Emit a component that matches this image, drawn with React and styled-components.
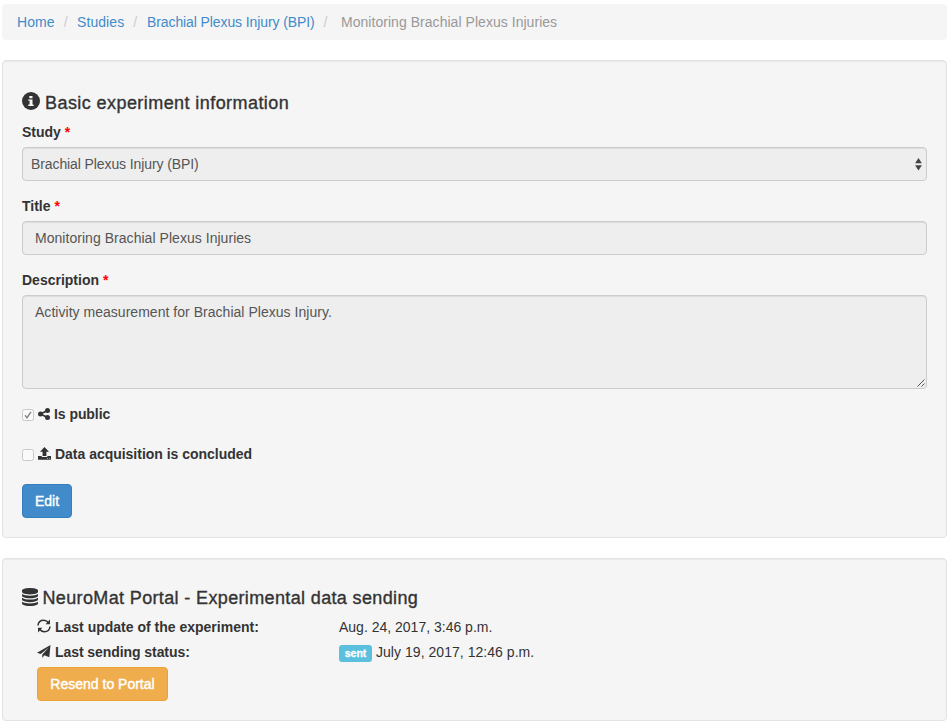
import React from "react";
import styled, { createGlobalStyle } from "styled-components";

const GlobalStyle = createGlobalStyle`
  *, *::before, *::after { box-sizing: border-box; }
  body {
    margin: 0;
    background: #fff;
    color: #333;
    font: 14px/20px "Liberation Sans", Arial, sans-serif;
  }
`;

const Page = styled.div`
  width: 951px;
  height: 724px;
  overflow: hidden;
  padding: 4px 4px 0 2px;
`;

const Breadcrumb = styled.ol`
  display: flex;
  height: 36px;
  margin: 0 0 20px;
  padding: 8px 15px;
  list-style: none;
  white-space: nowrap;
  background: #f5f5f5;
  border-radius: 4px;
`;

const Crumb = styled.li`
  display: flex;
  width: ${(p) => p.$width}px;
  color: #999;
`;

const CrumbLink = styled.a`
  color: #428bca;
  text-decoration: none;
  letter-spacing: ${(p) => p.$track || 0}px;
`;

const CrumbText = styled.span`
  letter-spacing: ${(p) => p.$track || 0}px;
`;

const Slash = styled.span`
  margin-left: 9px;
  color: #ccc;
`;

const Well = styled.section`
  height: ${(p) => p.$height}px;
  margin-bottom: 20px;
  padding: ${(p) => p.$top || 29}px 19px 19px;
  background: #f5f5f5;
  border: 1px solid #e3e3e3;
  border-radius: 4px;
  box-shadow: inset 0 1px 1px rgba(0, 0, 0, 0.05);
`;

const Heading = styled.h4`
  display: flex;
  align-items: center;
  gap: ${(p) => p.$gap}px;
  height: 20px;
  margin: 0 0 ${(p) => p.$after}px;
  font-size: 18px;
  font-weight: 400;
  line-height: 20px;
  white-space: nowrap;
`;

const HeadingText = styled.span`
  padding-top: 5px;
  letter-spacing: ${(p) => p.$track || 0}px;
  -webkit-text-stroke: 0.35px #333;
`;

const Field = styled.div`
  margin-bottom: 15px;
`;

const Label = styled.label`
  display: block;
  margin-bottom: 5px;
  font-weight: 700;
`;

const Required = styled.span`
  color: #f00;
`;

const Control = styled.div`
  display: flex;
  justify-content: space-between;
  height: ${(p) => p.$height || 34}px;
  padding: 6px ${(p) => p.$right || 12}px 1px ${(p) => p.$left || 12}px;
  color: #555;
  background: #eee;
  border: 1px solid #ccc;
  border-radius: 4px;
  box-shadow: inset 0 1px 1px rgba(0, 0, 0, 0.075);
  letter-spacing: ${(p) => p.$track || 0}px;
`;

const Arrows = styled.svg`
  margin-top: 4px;
`;

const Grip = styled.svg`
  align-self: flex-end;
`;

const CheckRow = styled.label`
  display: flex;
  align-items: center;
  height: 20px;
  margin-bottom: 20px;
  font-weight: 700;
  white-space: nowrap;
`;

const CheckBox = styled.span`
  display: flex;
  width: 12px;
  height: 12px;
  margin: 2px 4px 0 0;
  background: #fafafa;
  border: 1px solid #c8c8c8;
  border-radius: 2.5px;
`;

const RowText = styled.span`
  margin-left: ${(p) => p.$gap}px;
  letter-spacing: ${(p) => p.$track || 0}px;
`;

const Button = styled.button`
  display: block;
  width: ${(p) => p.$width}px;
  height: 34px;
  padding: 0;
  color: #fff;
  background: ${(p) => (p.$warning ? "#f0ad4e" : "#428bca")};
  border: 1px solid ${(p) => (p.$warning ? "#eea236" : "#357ebd")};
  border-radius: 4px;
  font: inherit;
  letter-spacing: ${(p) => p.$track || 0}px;
  -webkit-text-stroke: 0.4px #fff;
`;

const Status = styled.div`
  padding-left: 15px;
`;

const StatusRow = styled.div`
  display: grid;
  grid-template-columns: 302px 1fr;
  height: 20px;
  margin-bottom: 5px;
  white-space: nowrap;
`;

const StatusName = styled.div`
  display: flex;
  align-items: center;
  font-weight: 700;
`;

const StatusValue = styled.div`
  display: flex;
  align-items: center;
  letter-spacing: ${(p) => p.$track || 0}px;
`;

const Badge = styled.span`
  width: 33px;
  height: 17px;
  margin: 2px 4px 0 0;
  color: #fff;
  background: #5bc0de;
  border-radius: 3px;
  font-size: 10.5px;
  font-weight: 700;
  line-height: 16px;
  letter-spacing: 0;
  text-align: center;
  -webkit-text-stroke: 0.3px #fff;
`;

const Icon = styled.svg`
  flex: none;
  fill: #333;
  margin-top: ${(p) => p.$drop || 0}px;
`;

const InfoIcon = () => (
  <Icon width="18" height="18" viewBox="0 0 18 18" $drop={2}>
    <circle cx="9" cy="9" r="9" />
    <path fill="#f5f5f5" d="M7.3 4h3.2v2.2H7.3zM6.3 7.4h4.2v5.2h1.1V14H6.3v-1.4h1.3V8.8H6.3z" />
  </Icon>
);

const ShareIcon = () => (
  <Icon width="12" height="12" viewBox="0 0 12 12">
    <path fill="none" stroke="#333" strokeWidth="1.700" d="M9.500 2.400 2.500 6l7 3.600" />
    <circle cx="9.500" cy="2.500" r="2.500" />
    <circle cx="2.500" cy="6" r="2.500" />
    <circle cx="9.500" cy="9.500" r="2.500" />
  </Icon>
);

const UploadIcon = () => (
  <Icon width="13" height="13" viewBox="0 0 13 13" $drop={-1}>
    <path d="M6.500 0 11 4.800H8.400V9H4.600V4.800H2zM0 9H3.700v1h5.600V9H13v3.700H0zM9 11v.8h.8V11zM11 11v.8h.8V11z" fillRule="evenodd" />
  </Icon>
);

const DatabaseIcon = () => (
  <Icon width="16" height="18" viewBox="0 0 1536 1792" preserveAspectRatio="none" $drop={4}>
    <path d="M768 768q237 0 443-43t325-127v170q0 69-103 128t-280 93.500-385 34.500-385-34.500-280-93.500-103-128v-170q119 84 325 127t443 43zm0 768q237 0 443-43t325-127v170q0 69-103 128t-280 93.500-385 34.500-385-34.500-280-93.500-103-128v-170q119 84 325 127t443 43zm0-384q237 0 443-43t325-127v170q0 69-103 128t-280 93.500-385 34.500-385-34.500-280-93.500-103-128v-170q119 84 325 127t443 43zm0-1152q208 0 385 34.500t280 93.500 103 128v128q0 69-103 128t-280 93.500-385 34.500-385-34.500-280-93.500-103-128v-128q0-69 103-128t280-93.500 385-34.500z" />
  </Icon>
);

const RefreshIcon = () => (
  <Icon width="14" height="14" viewBox="0 0 14 14" $drop={-2}>
    <path fill="none" stroke="#333" strokeWidth="1.500" d="M1 6.500C1.300 3.200 3.800 1.300 6.700 1.300c2 0 3.500.8 4.700 2.400M13 7.500c-.3 3.300-2.800 5.200-5.700 5.200-2 0-3.500-.8-4.700-2.400" />
    <path d="M13 .5V5.300H8.600zM1 13.500V8.700h4.400z" />
  </Icon>
);

const PlaneIcon = () => (
  <Icon width="14" height="13" viewBox="0 0 14 13" $drop={-2}>
    <path d="M13.500 0 0 7.700 3.700 9 11.700 2.500 5.300 9.500V13l2.100-2.700 4.900 1.900z" />
  </Icon>
);

const CheckMark = () => (
  <svg width="10" height="10" viewBox="0 0 10 10">
    <path d="M2 5.300 4 7.700 8 1.800" fill="none" stroke="#888" strokeWidth="1.500" />
  </svg>
);

export default function App() {
  return (
    <>
      <GlobalStyle />
      <Page>
        <Breadcrumb>
          <Crumb $width={60}><CrumbLink $track={0.1}>Home</CrumbLink><Slash>/</Slash></Crumb>
          <Crumb $width={70}><CrumbLink $track={0.08}>Studies</CrumbLink><Slash>/</Slash></Crumb>
          <Crumb $width={194}><CrumbLink $track={-0.1}>Brachial Plexus Injury (BPI)</CrumbLink><Slash>/</Slash></Crumb>
          <Crumb $width={220}><CrumbText $track={0.04}>Monitoring Brachial Plexus Injuries</CrumbText></Crumb>
        </Breadcrumb>

        <Well $height={478}>
          <Heading $gap={5} $after={12}>
            <InfoIcon />
            <HeadingText $track={0.43}>Basic experiment information</HeadingText>
          </Heading>
          <Field>
            <Label>Study <Required>*</Required></Label>
            <Control $left={8} $right={4} $track={-0.1}>
              Brachial Plexus Injury (BPI)
              <Arrows width="7" height="13" viewBox="0 0 7 13">
                <path fill="#444" d="M3.500 0 6.900 5.200H.1zM3.500 12.500.1 7.300h6.800z" />
              </Arrows>
            </Control>
          </Field>
          <Field>
            <Label>Title <Required>*</Required></Label>
            <Control $track={0.04}>Monitoring Brachial Plexus Injuries</Control>
          </Field>
          <Field>
            <Label>Description <Required>*</Required></Label>
            <Control $height={94} $right={1} $track={0.03}>
              Activity measurement for Brachial Plexus Injury.
              <Grip width="8" height="8" viewBox="0 0 8 8">
                <path d="M.5 7.500 7.500.5M4.500 7.500 7.500 4.500" stroke="#555" fill="none" />
              </Grip>
            </Control>
          </Field>
          <CheckRow>
            <CheckBox><CheckMark /></CheckBox>
            <ShareIcon />
            <RowText $gap={4} $track={-0.06}>Is public</RowText>
          </CheckRow>
          <CheckRow>
            <CheckBox />
            <UploadIcon />
            <RowText $gap={4} $track={-0.02}>Data acquisition is concluded</RowText>
          </CheckRow>
          <Button $width={50}>Edit</Button>
        </Well>

        <Well $height={163} $top={26}>
          <Heading $gap={4.5} $after={12}>
            <DatabaseIcon />
            <HeadingText $track={0.36}>NeuroMat Portal - Experimental data sending</HeadingText>
          </Heading>
          <Status>
            <StatusRow>
              <StatusName><RefreshIcon /><RowText $gap={4}>Last update of the experiment:</RowText></StatusName>
              <StatusValue>Aug. 24, 2017, 3:46 p.m.</StatusValue>
            </StatusRow>
            <StatusRow>
              <StatusName><PlaneIcon /><RowText $gap={4} $track={-0.07}>Last sending status:</RowText></StatusName>
              <StatusValue $track={0.04}><Badge>sent</Badge>July 19, 2017, 12:46 p.m.</StatusValue>
            </StatusRow>
            <Button $width={131} $warning>Resend to Portal</Button>
          </Status>
        </Well>
      </Page>
    </>
  );
}
